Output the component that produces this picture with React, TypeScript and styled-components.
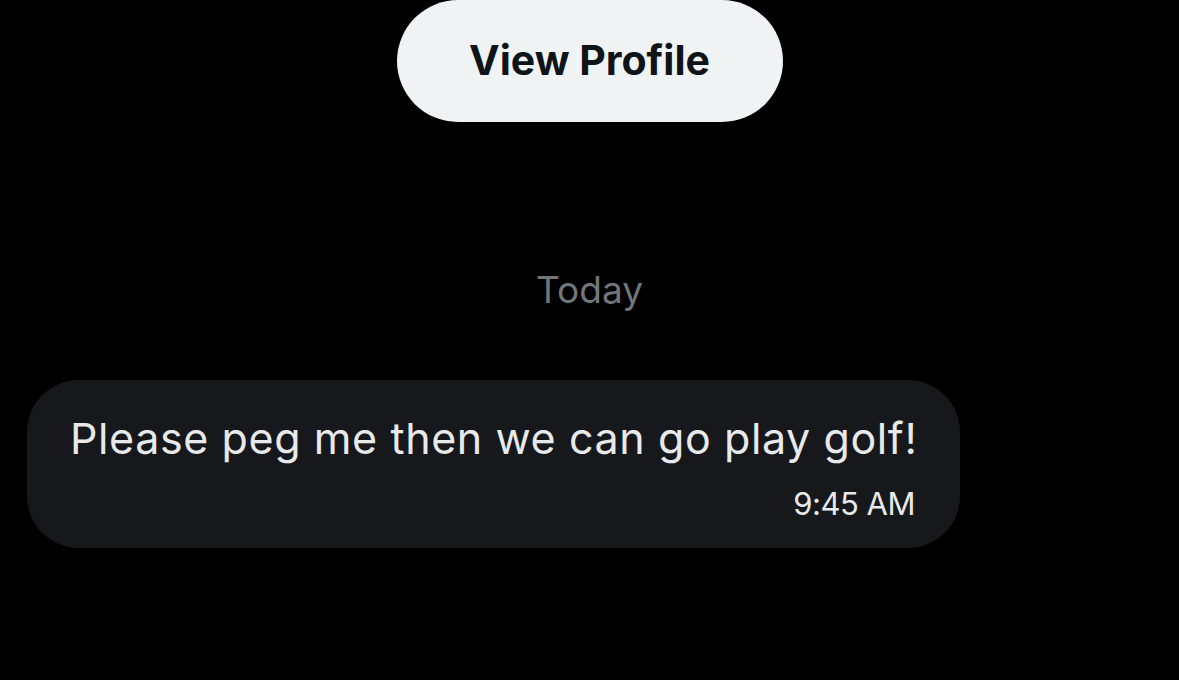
import { createGlobalStyle } from 'styled-components'
import styled from 'styled-components'

const GlobalStyle = createGlobalStyle`
  html, body {
    margin: 0;
    padding: 0;
    background: #000000;
  }
  body {
    font-family: Inter, 'Noto Sans', sans-serif;
    -webkit-font-smoothing: antialiased;
  }
`

const Page = styled.div`
  width: 1179px;
  height: 680px;
  overflow: hidden;
  background: #000000;
  display: flex;
  flex-direction: column;
`

const ProfileRow = styled.div`
  display: flex;
  justify-content: center;
`

const ProfileButton = styled.button`
  width: 386px;
  height: 122px;
  padding: 0 0 3px;
  border: none;
  border-radius: 61px;
  background: #eff3f4;
  color: #0f1419;
  font-family: Inter, sans-serif;
  font-weight: 700;
  font-size: 41px;
  cursor: pointer;
`

const DayLabel = styled.div`
  margin-top: 144px;
  text-align: center;
  color: #71767b;
  font-size: 37px;
  line-height: 48px;
`

const Bubble = styled.div`
  margin: 66px 0 0 27px;
  width: 933px;
  height: 168px;
  box-sizing: border-box;
  padding: 26px 45px 0 43px;
  border-radius: 52px;
  background: #16181c;
  display: flex;
  flex-direction: column;
`

const MessageText = styled.div`
  color: #e7e9ea;
  font-size: 43px;
  line-height: 64px;
  letter-spacing: 0.6px;
  white-space: nowrap;
`

const Timestamp = styled.div`
  align-self: flex-end;
  margin-top: 14px;
  color: #e7e9ea;
  font-size: 31px;
  line-height: 40px;
  letter-spacing: -0.5px;
`

export default function App() {
  return (
    <Page>
      <GlobalStyle />
      <ProfileRow>
        <ProfileButton>View Profile</ProfileButton>
      </ProfileRow>
      <DayLabel>Today</DayLabel>
      <Bubble>
        <MessageText>Please peg me then we can go play golf!</MessageText>
        <Timestamp>9:45 AM</Timestamp>
      </Bubble>
    </Page>
  )
}
